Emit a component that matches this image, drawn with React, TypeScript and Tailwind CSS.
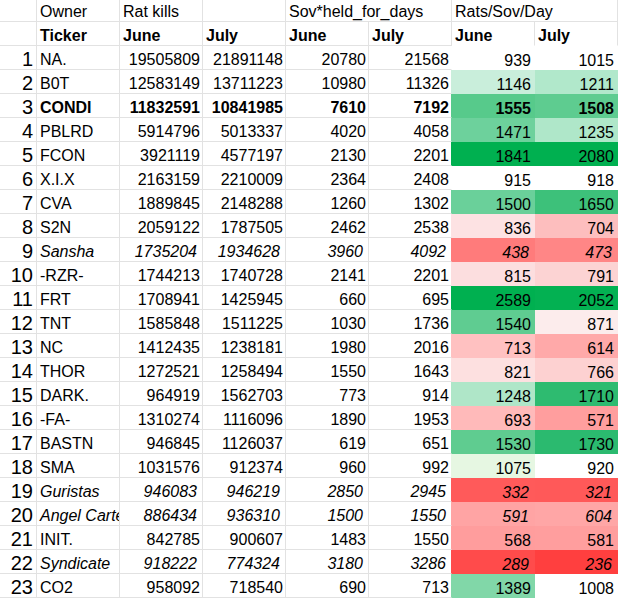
import React from 'react';

type Row = {
  n: number;
  t: string;
  a: string;
  b: string;
  c: string;
  d: string;
  e: string;
  f: string;
  eb: string;
  er: string;
  fb: string;
  s?: 'b' | 'i';
};

const rows: Row[] = [
  { n: 1, t: 'NA.', a: '19505809', b: '21891148', c: '20780', d: '21568', e: '939', f: '1015', eb: 'bg-white', er: 'border-r-white', fb: 'bg-white' },
  { n: 2, t: 'B0T', a: '12583149', b: '13711223', c: '10980', d: '11326', e: '1146', f: '1211', eb: 'bg-[#c9eedb]', er: 'border-r-[#c9eedb]', fb: 'bg-[#b1e8cb]' },
  { n: 3, t: 'CONDI', a: '11832591', b: '10841985', c: '7610', d: '7192', e: '1555', f: '1508', eb: 'bg-[#57ca8b]', er: 'border-r-[#57ca8b]', fb: 'bg-[#5ecc90]', s: 'b' },
  { n: 4, t: 'PBLRD', a: '5914796', b: '5013337', c: '4020', d: '4058', e: '1471', f: '1235', eb: 'bg-[#6dd19c]', er: 'border-r-[#6dd19c]', fb: 'bg-[#afe7c9]' },
  { n: 5, t: 'FCON', a: '3921119', b: '4577197', c: '2130', d: '2201', e: '1841', f: '2080', eb: 'bg-[#00b050]', er: 'border-r-[#00b050]', fb: 'bg-[#00b050]' },
  { n: 6, t: 'X.I.X', a: '2163159', b: '2210009', c: '2364', d: '2408', e: '915', f: '918', eb: 'bg-white', er: 'border-r-white', fb: 'bg-white' },
  { n: 7, t: 'CVA', a: '1889845', b: '2148288', c: '1260', d: '1302', e: '1500', f: '1650', eb: 'bg-[#6ad09a]', er: 'border-r-[#6ad09a]', fb: 'bg-[#3dc17a]' },
  { n: 8, t: 'S2N', a: '2059122', b: '1787505', c: '2462', d: '2538', e: '836', f: '704', eb: 'bg-[#fde2e3]', er: 'border-r-[#fde2e3]', fb: 'bg-[#fdbebe]' },
  { n: 9, t: 'Sansha', a: '1735204', b: '1934628', c: '3960', d: '4092', e: '438', f: '473', eb: 'bg-[#ff7b7b]', er: 'border-r-[#ff7b7b]', fb: 'bg-[#ff8686]', s: 'i' },
  { n: 10, t: '-RZR-', a: '1744213', b: '1740728', c: '2141', d: '2201', e: '815', f: '791', eb: 'bg-[#fcdedf]', er: 'border-r-[#fcdedf]', fb: 'bg-[#fcd3d3]' },
  { n: 11, t: 'FRT', a: '1708941', b: '1425945', c: '660', d: '695', e: '2589', f: '2052', eb: 'bg-[#00b050]', er: 'border-r-[#00b050]', fb: 'bg-[#03b152]' },
  { n: 12, t: 'TNT', a: '1585848', b: '1511225', c: '1030', d: '1736', e: '1540', f: '871', eb: 'bg-[#5fcc91]', er: 'border-r-[#5fcc91]', fb: 'bg-[#fcecec]' },
  { n: 13, t: 'NC', a: '1412435', b: '1238181', c: '1980', d: '2016', e: '713', f: '614', eb: 'bg-[#ffc1c1]', er: 'border-r-[#ffc1c1]', fb: 'bg-[#ffa9a9]' },
  { n: 14, t: 'THOR', a: '1272521', b: '1258494', c: '1550', d: '1643', e: '821', f: '766', eb: 'bg-[#fde0e0]', er: 'border-r-[#fde0e0]', fb: 'bg-[#fdd1d1]' },
  { n: 15, t: 'DARK.', a: '964919', b: '1562703', c: '773', d: '914', e: '1248', f: '1710', eb: 'bg-[#afe6c8]', er: 'border-r-[#afe6c8]', fb: 'bg-[#2ebb70]' },
  { n: 16, t: '-FA-', a: '1310274', b: '1116096', c: '1890', d: '1953', e: '693', f: '571', eb: 'bg-[#ffbaba]', er: 'border-r-[#ffbaba]', fb: 'bg-[#ff9e9e]' },
  { n: 17, t: 'BASTN', a: '946845', b: '1126037', c: '619', d: '651', e: '1530', f: '1730', eb: 'bg-[#5fcc90]', er: 'border-r-[#5fcc90]', fb: 'bg-[#2bba6f]' },
  { n: 18, t: 'SMA', a: '1031576', b: '912374', c: '960', d: '992', e: '1075', f: '920', eb: 'bg-[#e6f7e2]', er: 'border-r-[#e6f7e2]', fb: 'bg-white' },
  { n: 19, t: 'Guristas', a: '946083', b: '946219', c: '2850', d: '2945', e: '332', f: '321', eb: 'bg-[#ff5a5a]', er: 'border-r-[#ff5a5a]', fb: 'bg-[#ff5959]', s: 'i' },
  { n: 20, t: 'Angel Cartel', a: '886434', b: '936310', c: '1500', d: '1550', e: '591', f: '604', eb: 'bg-[#ffa4a4]', er: 'border-r-[#ffa4a4]', fb: 'bg-[#ffa6a6]', s: 'i' },
  { n: 21, t: 'INIT.', a: '842785', b: '900607', c: '1483', d: '1550', e: '568', f: '581', eb: 'bg-[#ff9d9d]', er: 'border-r-[#ff9d9d]', fb: 'bg-[#ff9e9e]' },
  { n: 22, t: 'Syndicate', a: '918222', b: '774324', c: '3180', d: '3286', e: '289', f: '236', eb: 'bg-[#ff4b4b]', er: 'border-r-[#ff4b4b]', fb: 'bg-[#ff3f3f]', s: 'i' },
  { n: 23, t: 'CO2', a: '958092', b: '718540', c: '690', d: '713', e: '1389', f: '1008', eb: 'bg-[#81d7a8]', er: 'border-r-[#81d7a8]', fb: 'bg-white' },
];

const GRID = 'border-r-[#e2e2e2]';
const GRIDB = 'border-b-[#e2e2e2]';

function Cell({
  children,
  className = '',
  rc = GRID,
  bc = GRIDB,
}: {
  children?: React.ReactNode;
  className?: string;
  rc?: string;
  bc?: string;
}) {
  return (
    <div
      className={`box-border flex items-end overflow-hidden whitespace-nowrap border-r border-b ${rc} ${bc} ${className}`}
    >
      {children}
    </div>
  );
}

export default function App() {
  return (
    <div className="w-[618px] h-[598px] overflow-hidden bg-white text-black font-['Liberation_Sans',Arial,sans-serif] text-[16px] leading-[18px]">
      <div className="grid grid-cols-[37px_repeat(7,83px)]">
        {/* header row 1 */}
        <Cell className="h-[22px]" />
        <Cell className="h-[22px] pl-[3px]">Owner</Cell>
        <Cell className="h-[22px] pl-[3px]">Rat kills</Cell>
        <Cell className="h-[22px]" />
        <Cell className="h-[22px] pl-[3px] col-span-2">Sov*held_for_days</Cell>
        <Cell className="h-[22px] pl-[3px] col-span-2">Rats/Sov/Day</Cell>

        {/* header row 2 */}
        <Cell className="h-[24px]" />
        <Cell className="h-[24px] pl-[3px] font-bold">Ticker</Cell>
        <Cell className="h-[24px] pl-[3px] font-bold">June</Cell>
        <Cell className="h-[24px] pl-[3px] font-bold">July</Cell>
        <Cell className="h-[24px] pl-[3px] font-bold">June</Cell>
        <Cell className="h-[24px] pl-[3px] font-bold">July</Cell>
        <Cell className="h-[24px] pl-[3px] font-bold" bc="border-b-white">June</Cell>
        <Cell className="h-[24px] pl-[3px] font-bold" bc="border-b-white">July</Cell>

        {rows.map((r) => {
          const st = r.s === 'b' ? 'font-bold' : r.s === 'i' ? 'italic' : '';
          const numPad = r.s === 'i' ? 'pr-[5px]' : 'pr-[2px]';
          const colPad = r.s === 'i' ? 'pr-[6px]' : 'pr-[4px]';
          return (
            <React.Fragment key={r.n}>
              <Cell className="h-[24px] justify-end pr-[3px] text-[20px] leading-[20px]">{r.n}</Cell>
              <Cell className={`h-[24px] pl-[3px] ${st}`}>{r.t}</Cell>
              <Cell className={`h-[24px] justify-end ${numPad} ${st}`}>{r.a}</Cell>
              <Cell className={`h-[24px] justify-end ${numPad} ${st}`}>{r.b}</Cell>
              <Cell className={`h-[24px] justify-end ${numPad} ${st}`}>{r.c}</Cell>
              <Cell className={`h-[24px] justify-end ${numPad} ${st}`} rc={r.er}>{r.d}</Cell>
              <div className={`box-border h-[24px] flex items-end justify-end overflow-hidden whitespace-nowrap ${colPad} ${r.eb} ${st}`}>
                {r.e}
              </div>
              <div className={`box-border h-[24px] flex items-end justify-end overflow-hidden whitespace-nowrap ${colPad} ${r.fb} ${st}`}>
                {r.f}
              </div>
            </React.Fragment>
          );
        })}
      </div>
    </div>
  );
}
